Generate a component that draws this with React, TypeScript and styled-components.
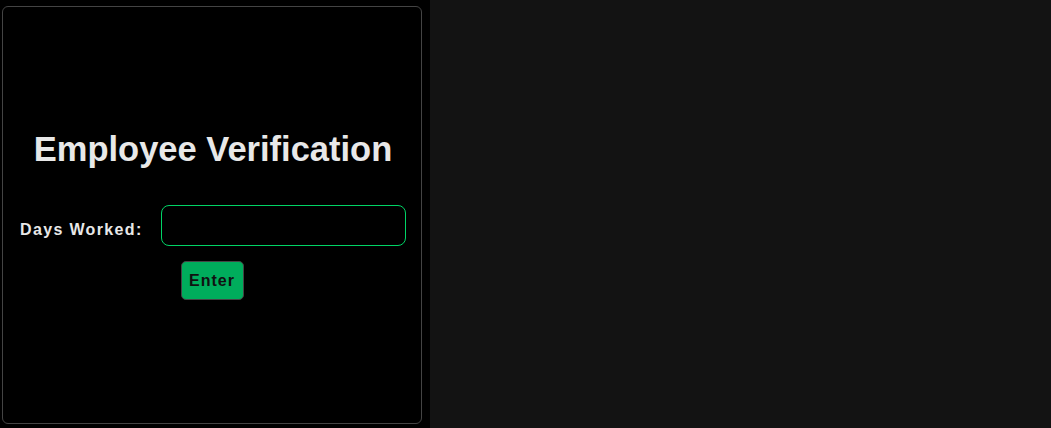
import React from "react";
import styled, { createGlobalStyle } from "styled-components";

const GlobalStyle = createGlobalStyle`
  html, body {
    margin: 0;
    padding: 0;
    background: #131313;
    font-family: "Liberation Sans", Arial, sans-serif;
  }
`;

const Page = styled.div`
  display: grid;
  grid-template-columns: 430px 1fr;
  height: 100vh;
  background: #131313;
`;

const Side = styled.div`
  background: #000;
  padding: 6px 8px 4px 2px;
  box-sizing: border-box;
  display: flex;
`;

const Card = styled.div`
  flex: 1;
  border: 1px solid #444;
  border-radius: 6px;
  display: flex;
  flex-direction: column;
  align-items: center;
  justify-content: center;
  padding: 0 15px 0 17px;
`;

const Title = styled.h1`
  margin: 0 0 36px;
  font-size: 34.5px;
  font-weight: bold;
  color: #e8e8e8;
  text-align: center;
`;

const Row = styled.div`
  display: flex;
  align-items: center;
  align-self: stretch;
  gap: 18px;
`;

const Label = styled.label`
  margin-top: 9px;
  font-size: 16px;
  font-weight: bold;
  letter-spacing: 1.35px;
  color: #e8e8e8;
  white-space: nowrap;
`;

const Input = styled.input`
  flex: 1;
  height: 41px;
  box-sizing: border-box;
  background: #000;
  border: 1px solid #00d466;
  border-radius: 8px;
  color: #e8e8e8;
  outline: none;
`;

const Button = styled.button`
  margin-top: 15px;
  margin-right: 2px;
  width: 63px;
  height: 39px;
  background: #00ad5c;
  border: 1px solid #444;
  border-radius: 5px;
  font-family: "Liberation Sans", Arial, sans-serif;
  font-size: 16px;
  font-weight: bold;
  letter-spacing: 1px;
  color: #111;
  cursor: pointer;
`;

export default function App() {
  const [days, setDays] = React.useState("");
  return (
    <>
      <GlobalStyle />
      <Page>
        <Side>
          <Card>
            <Title>Employee Verification</Title>
            <Row>
              <Label htmlFor="days">Days Worked:</Label>
              <Input id="days" value={days} onChange={(e) => setDays(e.target.value)} />
            </Row>
            <Button>Enter</Button>
          </Card>
        </Side>
        <div />
      </Page>
    </>
  );
}
